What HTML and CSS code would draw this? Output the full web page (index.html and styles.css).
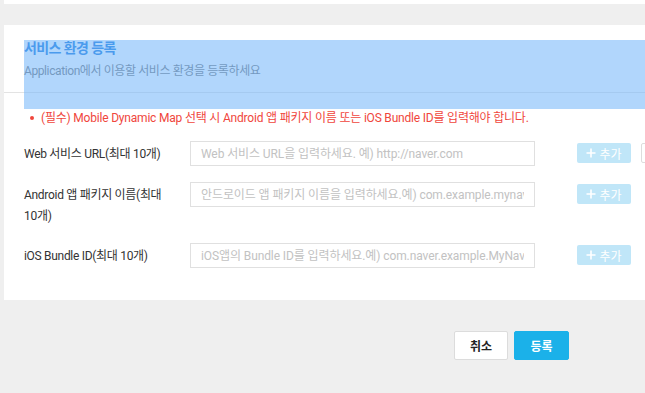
FILE: index.html
```html
<!DOCTYPE html>
<html lang="ko">

<head>
    <meta charset="UTF-8">
    <meta name="viewport" content="width=device-width, initial-scale=1.0">
    <title>서비스 환경 등록</title>
    <link rel="stylesheet" href="styles.css">
</head>

<body>
    <div class="page">
        <div class="card card-prev"></div>

        <div class="card env">
            <!-- 제목 -->
            <div class="env-head">
                <h2 class="env-title">서비스 환경 등록</h2>
                <p class="env-desc">Application에서 이용할 서비스 환경을 등록하세요</p>
            </div>
            <div class="highlight"></div>

            <ul class="notice">
                <li>(필수) Mobile Dynamic Map 선택 시 Android 앱 패키지 이름 또는 iOS Bundle ID를 입력해야 합니다.</li>
            </ul>

            <!-- 입력 영역 -->
            <div class="form">
                <div class="row">
                    <label class="row-label">Web 서비스 URL(최대 10개)</label>
                    <input class="row-input" type="text" placeholder="Web 서비스 URL을 입력하세요. 예) http://naver.com">
                    <span class="btn-add"><svg class="ico-plus" viewBox="0 0 10 10"><path d="M5 0.5V9.5M0.5 5H9.5"/></svg>추가</span>
                    <span class="btn-ghost"></span>
                </div>
                <div class="row">
                    <label class="row-label">Android 앱 패키지 이름(최대 10개)</label>
                    <input class="row-input" type="text" placeholder="안드로이드 앱 패키지 이름을 입력하세요.예) com.example.mynaver">
                    <span class="btn-add"><svg class="ico-plus" viewBox="0 0 10 10"><path d="M5 0.5V9.5M0.5 5H9.5"/></svg>추가</span>
                </div>
                <div class="row">
                    <label class="row-label">iOS Bundle ID(최대 10개)</label>
                    <input class="row-input" type="text" placeholder="iOS앱의 Bundle ID를 입력하세요.예) com.naver.example.MyNaver">
                    <span class="btn-add"><svg class="ico-plus" viewBox="0 0 10 10"><path d="M5 0.5V9.5M0.5 5H9.5"/></svg>추가</span>
                </div>
            </div>
        </div>

        <div class="actions">
            <button class="btn btn-cancel">취소</button>
            <button class="btn btn-ok">등록</button>
        </div>
    </div>
</body>

</html>
```

FILE: styles.css
```css
* {
    padding: 0;
    margin: 0;
    list-style: none;
    box-sizing: border-box;
}

html,
body {
    background: #efefef;
    overflow: hidden;
    height: 100%;
}

body {
    font-family: Roboto, "Noto Sans CJK KR", sans-serif;
    color: #333;
}

.page {
    padding-left: 4px;
    width: 645px;
}

.card {
    background: #fff;
}

.card-prev {
    height: 4px;
    margin-bottom: 21px;
}

.env {
    position: relative;
    padding-bottom: 32px;
    overflow: hidden;
}

.env-head {
    padding: 14px 20px 12px;
    border-bottom: 1px solid #e3e3e3;
}

.env-title {
    font-size: 14px;
    line-height: 18px;
    font-weight: bold;
    color: #0a72db;
    letter-spacing: -0.6px;
}

.env-desc {
    margin-top: 5px;
    font-size: 12px;
    line-height: 18px;
    color: #6e6e6e;
    letter-spacing: -0.4px;
}

.highlight {
    position: absolute;
    left: 20px;
    top: 15px;
    right: 0;
    height: 69px;
    background: rgba(120, 185, 250, 0.58);
}

.notice {
    margin-top: 16px;
    padding-left: 24px;
}

.notice li {
    position: relative;
    padding-left: 13px;
    font-size: 12px;
    line-height: 18px;
    color: #f0463c;
    letter-spacing: -0.2px;
}

.notice li::before {
    content: "";
    position: absolute;
    left: 2px;
    top: 7px;
    width: 4px;
    height: 4px;
    border-radius: 50%;
    background: #f0463c;
}

.form {
    margin-top: 14px;
    padding-left: 20px;
    display: flex;
    flex-direction: column;
    gap: 16px;
}

.row {
    display: flex;
    align-items: flex-start;
    white-space: nowrap;
}

.row-label {
    flex: none;
    width: 142px;
    margin-right: 24px;
    padding-top: 3px;
    font-size: 12px;
    line-height: 21px;
    color: #333;
    letter-spacing: -0.3px;
    white-space: normal;
}

.row-input {
    flex: none;
    width: 345px;
    height: 25px;
    border: 1px solid #e0e0e0;
    padding: 0 10px;
    font-family: Roboto, "Noto Sans CJK KR", sans-serif;
    font-size: 12px;
    letter-spacing: -0.1px;
    color: #333;
    outline: none;
}

.row-input::placeholder {
    color: #c2c2c2;
}

.btn-add {
    flex: none;
    display: flex;
    align-items: center;
    justify-content: center;
    gap: 3px;
    margin: 2px 0 0 42px;
    width: 54px;
    height: 20px;
    border-radius: 2px;
    background: #c0e6f8;
    color: #fff;
    font-size: 12px;
}

.ico-plus {
    width: 10px;
    height: 10px;
    stroke: #fff;
    stroke-width: 1.6;
    fill: none;
}

.btn-ghost {
    flex: none;
    margin: 2px 0 0 10px;
    width: 54px;
    height: 20px;
    border: 1px solid #ddd;
    border-radius: 2px;
    background: #fff;
}

.actions {
    display: flex;
    justify-content: flex-end;
    gap: 6px;
    width: 565px;
    margin-top: 31px;
}

.btn {
    width: 54px;
    height: 29px;
    border-radius: 2px;
    font-family: Roboto, "Noto Sans CJK KR", sans-serif;
    font-size: 12px;
    font-weight: bold;
    cursor: pointer;
}

.btn-cancel {
    background: #fff;
    border: 1px solid #dcdcdc;
    color: #222;
}

.btn-ok {
    width: 55px;
    background: #1bb1e9;
    border: 1px solid #1bb1e9;
    color: #fff;
}
```
